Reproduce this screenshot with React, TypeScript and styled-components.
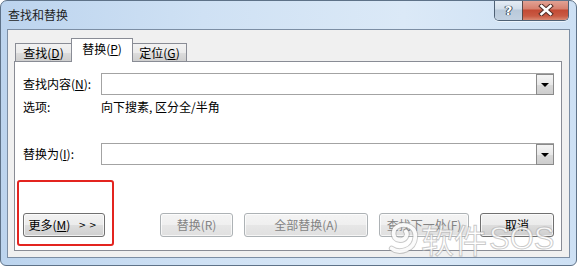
import React from "react";
import styled, { createGlobalStyle } from "styled-components";

const Global = createGlobalStyle`
  html, body { margin: 0; padding: 0; background: #ffffff; }
  body { font-family: "Noto Sans CJK SC", "Microsoft YaHei", sans-serif; font-size: 12px; }
  * { box-sizing: border-box; }
`;

const Window = styled.div`
  position: relative;
  width: 577px;
  height: 266px;
  display: flex;
  flex-direction: column;
  border: 1px solid #5e7288;
  border-radius: 7px 7px 6px 6px;
  background: linear-gradient(to right, #bcd4ee 0%, #cfe1f4 35%, #dbe9f7 70%, #cde0f4 100%);
  overflow: hidden;
  color: #000;
`;

const TitleBar = styled.div`
  height: 28px;
  display: flex;
  align-items: flex-start;
  justify-content: space-between;
  padding-left: 7px;
`;

const Title = styled.div`
  margin-top: 6px;
  font-size: 12px;
  line-height: 16px;
  color: #1e1e1e;
`;

const Caption = styled.div`
  display: flex;
  margin-top: -1px;
  margin-right: 7px;
  border: 1px solid #4f6175;
  border-top: none;
  border-radius: 0 0 5px 5px;
  overflow: hidden;
  box-shadow: 0 1px 0 rgba(255, 255, 255, 0.6);
`;

const CapButton = styled.div<{ $close?: boolean }>`
  width: ${(p) => (p.$close ? 46 : 27)}px;
  height: 20px;
  display: flex;
  align-items: center;
  justify-content: center;
  background: ${(p) =>
    p.$close
      ? "linear-gradient(to bottom, #e3a699 0%, #d6806e 45%, #c34a34 50%, #c95a43 80%, #d98a74 100%)"
      : "linear-gradient(to bottom, #e7eef6 0%, #d2deea 45%, #b9c9da 50%, #c2d1e1 100%)"};
  border-left: ${(p) => (p.$close ? "1px solid #5a4a4a" : "none")};
  color: #fff;
  font-family: "DejaVu Sans", sans-serif;
  font-weight: bold;
  font-size: 13px;
  text-shadow: 0 0 1px #3b4a5b, 0 0 1px #3b4a5b, 1px 0 0 #3b4a5b, -1px 0 0 #3b4a5b;
`;

const Client = styled.div`
  margin: 0 6px;
  height: 229px;
  border: 1px solid #7c8ea4;
  background: #f0f0f0;
  padding: 8px 7px 6px 6px;
  display: flex;
  flex-direction: column;
`;

const TabStrip = styled.div`
  display: flex;
  align-items: flex-end;
  height: 23px;
  padding-left: 1px;
`;

const Tab = styled.div<{ $active?: boolean; $w: number }>`
  position: relative;
  width: ${(p) => p.$w}px;
  height: ${(p) => (p.$active ? 24 : 18)}px;
  margin-bottom: ${(p) => (p.$active ? -1 : 0)}px;
  z-index: ${(p) => (p.$active ? 2 : 0)};
  border: 1px solid #898c95;
  border-bottom: none;
  background: ${(p) =>
    p.$active ? "#ffffff" : "linear-gradient(to bottom, #f2f2f2 0%, #ebebeb 50%, #dddddd 51%, #cfcfcf 100%)"};
  display: flex;
  align-items: center;
  justify-content: center;
  font-size: 12px;
  line-height: 16px;
  padding-bottom: ${(p) => (p.$active ? 3 : 0)}px;
  & + & { margin-left: -1px; }
`;

const Panel = styled.div`
  position: relative;
  z-index: 1;
  flex: 1;
  background: #ffffff;
  border: 1px solid #898c95;
  padding: 11px 7px 0 8px;
  display: flex;
  flex-direction: column;
`;

const FieldRow = styled.div<{ $top: number }>`
  display: grid;
  grid-template-columns: 78px 1fr;
  align-items: center;
  margin-top: ${(p) => p.$top}px;
  min-height: 16px;
`;

const Label = styled.div`
  font-size: 12px;
  line-height: 16px;
  white-space: nowrap;
`;

const Combo = styled.div`
  height: 22px;
  border: 1px solid #a3a3a3;
  display: flex;
  justify-content: flex-end;
  background: #fff;
`;

const DropButton = styled.div`
  width: 18px;
  height: 21px;
  margin: 0 -1px 0 0;
  border: 1px solid #8a8a8a;
  background: linear-gradient(to bottom, #f4f4f4 0%, #e8e8e8 50%, #d9d9d9 51%, #cdcdcd 100%);
  display: flex;
  align-items: center;
  justify-content: center;
`;

const Arrow = styled.div`
  width: 0;
  height: 0;
  border-left: 4px solid transparent;
  border-right: 4px solid transparent;
  border-top: 4px solid #000;
  margin-top: 1px;
`;

const ButtonRow = styled.div`
  display: flex;
  align-items: center;
  margin-top: 48px;
  gap: 11px;
`;

const Spacer = styled.div`
  flex: 1;
`;

const Button = styled.div<{ $w: number; $disabled?: boolean }>`
  width: ${(p) => p.$w}px;
  height: 24px;
  border: 1px solid ${(p) => (p.$disabled ? "#adb2b5" : "#707070")};
  border-radius: 3px;
  background: ${(p) =>
    p.$disabled
      ? "linear-gradient(to bottom, #f4f4f4 0%, #efefef 50%, #e6e6e6 51%, #e0e0e0 100%)"
      : "linear-gradient(to bottom, #f2f2f2 0%, #ebebeb 50%, #dddddd 51%, #cfcfcf 100%)"};
  box-shadow: inset 0 0 0 1px rgba(255, 255, 255, 0.7);
  color: ${(p) => (p.$disabled ? "#838383" : "#000")};
  display: flex;
  align-items: center;
  justify-content: center;
  font-size: 12px;
  line-height: 16px;
  white-space: nowrap;
`;

const Chevrons = styled.span`
  margin-left: 8px;
  font-family: "DejaVu Sans", sans-serif;
  font-size: 9px;
  letter-spacing: 3px;
`;

const Highlight = styled.div`
  position: absolute;
  left: 16px;
  top: 179px;
  width: 97px;
  height: 66px;
  border: 2px solid #e3241f;
  border-radius: 3px;
  pointer-events: none;
  z-index: 5;
`;

const Watermark = styled.div`
  position: absolute;
  left: 385px;
  top: 216px;
  display: flex;
  align-items: center;
  gap: 1px;
  z-index: 6;
  pointer-events: none;
  color: rgba(255, 255, 255, 0.85);
  -webkit-text-stroke: 1px rgba(150, 150, 150, 0.5);
  font-family: "Noto Sans CJK SC", sans-serif;
  font-size: 33px;
  line-height: 44px;
  white-space: nowrap;
`;

const WatermarkLatin = styled.span`
  font-family: "Liberation Sans", sans-serif;
  font-size: 31px;
  margin-left: 1px;
`;

export default function App() {
  return (
    <>
      <Global />
      <Window>
        <TitleBar>
          <Title>查找和替换</Title>
          <Caption>
            <CapButton>?</CapButton>
            <CapButton $close>
              <svg width="16" height="12" viewBox="0 0 16 12">
                <path d="M3.5 2 L12.5 10 M12.5 2 L3.5 10" stroke="#55302a" strokeWidth="4.6" strokeLinecap="square" />
                <path d="M3.5 2 L12.5 10 M12.5 2 L3.5 10" stroke="#ffffff" strokeWidth="2.6" strokeLinecap="square" />
              </svg>
            </CapButton>
          </Caption>
        </TitleBar>
        <Client>
          <TabStrip>
            <Tab $w={57}>
              查找(<u>D</u>)
            </Tab>
            <Tab $w={62} $active>
              替换(<u>P</u>)
            </Tab>
            <Tab $w={55}>
              定位(<u>G</u>)
            </Tab>
          </TabStrip>
          <Panel>
            <FieldRow $top={0}>
              <Label>
                查找内容(<u>N</u>):
              </Label>
              <Combo>
                <DropButton>
                  <Arrow />
                </DropButton>
              </Combo>
            </FieldRow>
            <FieldRow $top={4}>
              <Label>选项:</Label>
              <Label>向下搜素, 区分全/半角</Label>
            </FieldRow>
            <FieldRow $top={28}>
              <Label>
                替换为(<u>I</u>):
              </Label>
              <Combo>
                <DropButton>
                  <Arrow />
                </DropButton>
              </Combo>
            </FieldRow>
            <ButtonRow>
              <Button $w={82}>
                更多(<u>M</u>)<Chevrons>&gt;&gt;</Chevrons>
              </Button>
              <Spacer />
              <Button $w={73} $disabled>
                替换(R)
              </Button>
              <Button $w={124} $disabled>
                全部替换(A)
              </Button>
              <Button $w={90} $disabled>
                查找下一处(F)
              </Button>
              <Button $w={74}>取消</Button>
            </ButtonRow>
          </Panel>
        </Client>
        <Highlight />
        <Watermark>
          <svg width="34" height="40" viewBox="0 0 36 40">
            <path
              d="M6 30 C14 36 30 32 31 18 C32 8 22 3 14 6 C6 9 6 20 14 21 C20 22 24 16 21 12"
              fill="none"
              stroke="rgba(150,150,150,0.5)"
              strokeWidth="6"
              strokeLinecap="round"
            />
            <path
              d="M6 30 C14 36 30 32 31 18 C32 8 22 3 14 6 C6 9 6 20 14 21 C20 22 24 16 21 12"
              fill="none"
              stroke="rgba(255,255,255,0.92)"
              strokeWidth="4"
              strokeLinecap="round"
            />
          </svg>
          <span>软件</span>
          <WatermarkLatin>SOS</WatermarkLatin>
        </Watermark>
      </Window>
    </>
  );
}
